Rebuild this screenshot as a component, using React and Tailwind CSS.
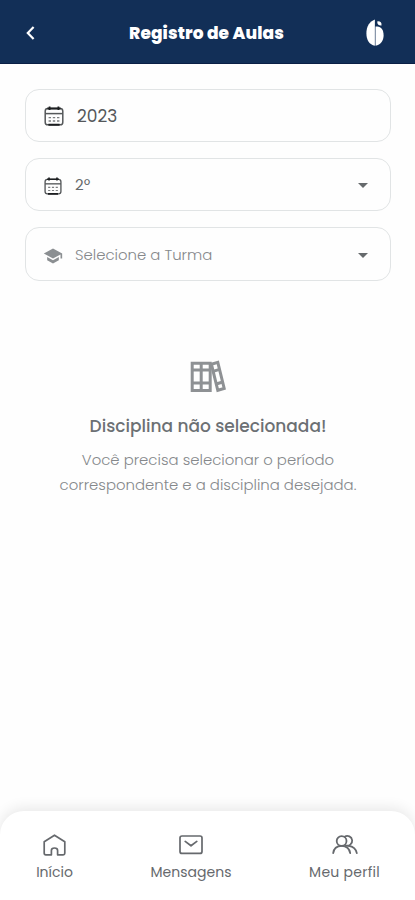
const CalendarIcon = ({ className }) => (
  <svg className={className} viewBox="0 0 20 20" fill="none" stroke="#55585a" strokeWidth="1.5">
    <rect x="1.2" y="2.6" width="17.6" height="16.2" rx="2.6" />
    <path d="M1.2 7.6H18.8" />
    <path d="M3.4 2.5H16.6M4.4 18.7H15.6" stroke="#1c1e20" strokeWidth="1.9" />
    <path d="M5.6 0.6V4M14.4 0.6V4" stroke="#1c1e20" strokeWidth="1.8" />
    <path d="M4.6 11.6H7M8.8 11.6H11.2M13 11.6H15.4M4.6 15H7M8.8 15H11.2M13 15H15.4" stroke="#7b7e80" strokeWidth="1.3" />
  </svg>
);

const GraduationIcon = () => (
  <svg className="w-5 h-5 shrink-0" viewBox="0 0 24 24" fill="#8b8f92">
    <path d="M5 13.18v4L12 21l7-3.82v-4L12 17l-7-3.82zM12 3L1 9l11 6 9-4.91V15h2V9L12 3z" />
  </svg>
);

const ArrowDown = () => (
  <svg className="w-[10px] h-[5px] ml-auto" viewBox="0 0 10 5" fill="#666a6c">
    <path d="M0 0H10L5 5Z" />
  </svg>
);

const BooksIcon = () => (
  <svg className="w-[36px] h-[33px]" viewBox="0 0 36 33" fill="none" stroke="#8e9194" strokeWidth="3">
    <path d="M2.2 3.2H20.2V30.6H2.2ZM11.2 3.2V30.6M2.2 10H20.2M2.2 23H20.2" />
    <path d="M21.4 4.2L27.8 2.3L34.2 28.4L27.8 30.3Z" />
    <path d="M23 11.4L29.6 9.4M26.2 24L32.8 22" />
  </svg>
);

const LogoIcon = () => (
  <svg className="w-[18px] h-[27px]" viewBox="0 0 18 27" fill="#fff">
    <path d="M8.9 0.4C3.4 2.6 0.4 7.2 0.4 14.2C0.4 21.2 3.4 25.6 8.9 26.7Z" />
    <path d="M9.5 7.6C14.6 6.4 17.6 10.4 17.6 16.2C17.6 22 14.6 25.6 9.5 26.7Z" />
    <path d="M11.3 2.4C14.2 2 15.8 3.6 15.5 6.4C12.7 6.7 11 5 11.3 2.4Z" />
  </svg>
);

const HomeIcon = () => (
  <svg className="w-[23px] h-[22px]" viewBox="0 0 23 22" fill="none" stroke="#66696d" strokeWidth="1.7" strokeLinejoin="round">
    <path d="M1.2 7.8L11.5 1.2L21.8 7.8V19.2Q21.8 20.8 20.2 20.8H14.6V16.4Q14.6 14 11.5 14Q8.4 14 8.4 16.4V20.8H2.8Q1.2 20.8 1.2 19.2Z" />
  </svg>
);

const MailIcon = () => (
  <svg className="w-[24px] h-[22px]" viewBox="0 0 24 22" fill="none" stroke="#66696d" strokeWidth="1.7" strokeLinecap="round" strokeLinejoin="round">
    <rect x="1" y="2" width="22" height="17.4" rx="2" />
    <path d="M6.2 7.4L12 11.8L17.8 7.4" />
  </svg>
);

const UsersIcon = () => (
  <svg className="w-[26px] h-[22px]" viewBox="0 0 26 22" fill="none" stroke="#66696d" strokeWidth="1.8" strokeLinecap="round">
    <circle cx="9.6" cy="7" r="4.9" />
    <path d="M12.6 2.7A4.9 4.9 0 1 1 13.6 11.4" />
    <path d="M1.2 19.2C1.8 14.6 5 11.9 9.6 11.9C14.2 11.9 17.4 14.6 18.2 19.2" />
    <path d="M16.6 11.9C20.8 12.4 24 15 24.8 19.2" />
  </svg>
);

const navItems = [
  { label: 'Início', icon: <HomeIcon />, className: 'w-[37px]' },
  { label: 'Mensagens', icon: <MailIcon />, className: 'w-[80px]' },
  { label: 'Meu perfil', icon: <UsersIcon />, className: 'w-[71px] tracking-[0.25px]' }
];

const App = () => {
  return (
    <div className="flex flex-col h-[900px] bg-[#fefefe] overflow-hidden font-['Poppins','Inter',sans-serif]">
      <header className="flex items-center justify-between h-16 shrink-0 pl-[26px] pr-[31px] pt-[2px] bg-[#122f57] border-b border-[#0a1f45] text-white">
        <button type="button" aria-label="Voltar" className="w-[18px]">
          <svg className="w-[9px] h-[14px]" viewBox="0 0 9 14" fill="none" stroke="currentColor" strokeWidth="2.2">
            <path d="M7.6 1L1.8 7L7.6 13" />
          </svg>
        </button>
        <h1 className="ml-[3px] pt-[2px] text-[17px] font-extrabold tracking-[0.1px] whitespace-nowrap">Registro de Aulas</h1>
        <LogoIcon />
      </header>

      <main className="flex-1 pl-[25px] pr-6 pt-[25px]">
        <div className="space-y-4">
          <div className="flex items-center h-[53px] px-[18px] border border-[#e1e4e5] rounded-[14px]">
            <CalendarIcon className="w-5 h-5 shrink-0" />
            <span className="ml-[13px] pt-[2px] text-[17px] text-[#55585b]">2023</span>
          </div>
          <div className="flex items-center h-[53px] pl-[18px] pr-[22px] pt-[2px] border border-[#e1e4e5] rounded-[14px]">
            <CalendarIcon className="w-[18px] h-[18px] shrink-0" />
            <span className="ml-[13px] text-[15px] text-[#66696c]">2º</span>
            <ArrowDown />
          </div>
          <div className="flex items-center h-[54px] pl-[17px] pr-[22px] pt-[3px] border border-[#e1e4e5] rounded-[14px]">
            <GraduationIcon />
            <span className="ml-[12px] text-[14.9px] font-light text-[#85888b]">Selecione a Turma</span>
            <ArrowDown />
          </div>
        </div>

        <div className="flex flex-col items-center mt-[79px] text-center">
          <BooksIcon />
          <h2 className="mt-[21px] text-[17px] leading-6 font-medium text-[#6c7074] whitespace-nowrap">Disciplina não selecionada!</h2>
          <p className="mt-[9px] text-[14.9px] leading-[25px] font-light text-[#85888b] whitespace-nowrap">
            Você precisa selecionar o período
            <br />
            correspondente e a disciplina desejada.
          </p>
        </div>
      </main>

      <nav className="flex justify-between h-[89px] shrink-0 pl-9 pr-[35px] pt-[23px] bg-white rounded-t-[24px] shadow-[0_-3px_14px_rgba(0,0,0,0.09)]">
        {navItems.map((item) => (
          <a key={item.label} href="#" className="flex flex-col items-center text-[#66696d]">
            {item.icon}
            <span className={`mt-[6px] text-[14px] leading-5 whitespace-nowrap flex justify-center ${item.className}`}>{item.label}</span>
          </a>
        ))}
      </nav>
    </div>
  );
};

export default App;
